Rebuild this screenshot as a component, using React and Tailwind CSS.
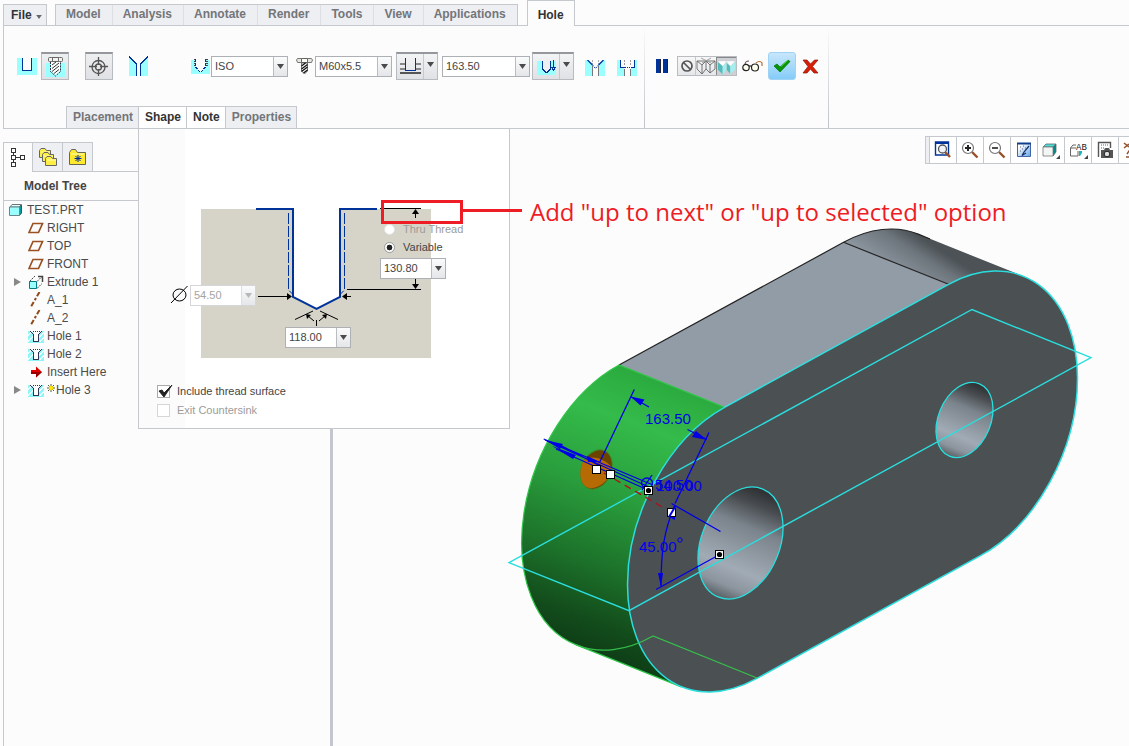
import { useState } from "react";
import clsx from "clsx";

const CYAN = "#99ffff";
const NAVY = "#003399";

const mainTabs = ["Model", "Analysis", "Annotate", "Render", "Tools", "View", "Applications"];

const subTabs = [
  { name: "Placement", lit: false },
  { name: "Shape", lit: true },
  { name: "Note", lit: true },
  { name: "Properties", lit: false },
];

const treeItems = [
  { name: "RIGHT", icon: PlaneIcon },
  { name: "TOP", icon: PlaneIcon },
  { name: "FRONT", icon: PlaneIcon },
  { name: "Extrude 1", icon: ExtrudeIcon, expandable: true },
  { name: "A_1", icon: AxisIcon },
  { name: "A_2", icon: AxisIcon },
  { name: "Hole 1", icon: TreeHoleIcon },
  { name: "Hole 2", icon: TreeHoleIcon },
  { name: "Insert Here", icon: InsertIcon },
  { name: "Hole 3", icon: TreeHoleIcon, expandable: true, isNew: true },
];

/* ---------- Ribbon icons ---------- */

function SimpleHoleIcon() {
  return (
    <svg width="20" height="17" viewBox="0 0 20 17" shapeRendering="crispEdges">
      <path d="M0 0h5v13h10V0h5v17H0z" fill={CYAN} />
      <path d="M5.500 0v12.500h9V0" fill="none" stroke={NAVY} />
    </svg>
  );
}

function ScrewIcon() {
  return (
    <svg width="19" height="20" viewBox="0 0 19 20">
      <path d="M0 6h19v14H0z" fill={CYAN} />
      <rect x="2.500" y=".5" width="4" height="4" rx="1" fill="#f2f2ee" stroke="#666" />
      <rect x="6.500" y=".5" width="6" height="4" fill="#f2f2ee" stroke="#666" />
      <rect x="12.500" y=".5" width="4" height="4" rx="1" fill="#f2f2ee" stroke="#666" />
      <path d="M5 5h9v9l-4.500 4.500L5 14z" fill="#fff" />
      <path d="M6 8l4-3M6 11.500l7-5.500M6 14.500l7-5.500M8 16.500l5-4" stroke="#333" />
      <path d="M4.500 5v9.500l5 4.500 5-4.500V5" fill="none" stroke="#334" strokeDasharray="2 1" />
    </svg>
  );
}

function BoltIcon() {
  return (
    <svg width="17" height="18" viewBox="0 0 17 18">
      <path d="M1.500 1.500h14l1 1.500-1 2.500h-14l-1-2.500z" fill="#e6e6e2" stroke="#777" />
      <path d="M5.500 1.500h6v4h-6z" fill="#fafaf6" stroke="#666" />
      <path d="M5.500 6h6v8l-3 3-3-3z" fill="#fff" stroke="#555" strokeWidth=".8" />
      <path d="M5.500 9l4-3M5.500 12l6-4.500M5.500 14.500l6-4.500M7.500 16l4-3" stroke="#111" strokeWidth="1.300" />
    </svg>
  );
}

function TargetIcon() {
  return (
    <svg width="20" height="20" viewBox="0 0 20 20" fill="none" stroke="#555" strokeWidth="1.300">
      <circle cx="9.500" cy="10" r="6.500" />
      <circle cx="9.500" cy="10" r="3" />
      <path d="M9.500 0v8M9.500 12v7M0 9.500h8M11 9.500h8" />
    </svg>
  );
}

function CountersinkIcon() {
  return (
    <svg width="19" height="20" viewBox="0 0 19 20" shapeRendering="crispEdges">
      <path d="M0 1l7 7v12H0zM19 1l-7 7v12h7z" fill={CYAN} />
      <path d="M0 .5l7.500 7.500v12M19 .5L11.500 8v12" fill="none" stroke={NAVY} strokeWidth="1.300" />
    </svg>
  );
}

function ThreadIcon() {
  return (
    <svg width="19" height="16" viewBox="0 0 19 16" shapeRendering="crispEdges">
      <path d="M0 2h4v6l5.500 6L15 8V2h4v14H0z" fill={CYAN} />
      <path d="M3.500 1v7M15.500 1v7" stroke="#445" strokeWidth="2" strokeDasharray="1 1" />
      <path d="M4.500 1v8l5 5.500 5-5.500V1" fill="none" stroke={NAVY} strokeDasharray="3 1" />
    </svg>
  );
}

function DepthIcon() {
  return (
    <svg width="21" height="17" viewBox="0 0 21 17" shapeRendering="crispEdges">
      <path d="M0 6h6M15 6h6M0 10.500h6M15 10.500h6" stroke="#888" strokeWidth="2" />
      <path d="M0 15h21" stroke="#555" strokeWidth="2" />
      <path d="M5.500 0v12.500h10V0" fill="none" stroke={NAVY} />
    </svg>
  );
}

function DrillDepthIcon() {
  return (
    <svg width="19" height="16" viewBox="0 0 19 16" shapeRendering="crispEdges">
      <path d="M0 2h19v14H0z" fill={CYAN} />
      <path d="M5 2h9v7l-4.500 4L5 9z" fill="#eef0f2" />
      <path d="M5.500 2v8l4.500 4 3.500-4V2" fill="none" stroke={NAVY} strokeWidth="1.300" />
      <path d="M16.500 1v8M14.500 8l2 3 2-3" fill="none" stroke={NAVY} strokeWidth="1.300" />
    </svg>
  );
}

function SinkIcon() {
  return (
    <svg width="20" height="16" viewBox="0 0 20 16">
      <path d="M0 0h3l4 4v12H0zM20 0h-2l-4 4v12h6z" fill={CYAN} />
      <path d="M7.500 6v10M13.500 6v10" stroke="#777" />
      <path d="M7.500 0v4M13.500 0v4" stroke="#aaa" strokeDasharray="2 1" />
      <path d="M2.500 0l5 5M18.500 0l-5 5" stroke={NAVY} strokeWidth="1.300" />
      <path d="M7.500 5l3 3.500 3-3.500" fill="none" stroke={NAVY} strokeDasharray="1.500 1" />
    </svg>
  );
}

function BoreIcon() {
  return (
    <svg width="20" height="16" viewBox="0 0 20 16" shapeRendering="crispEdges">
      <path d="M0 0h3v8h4v8H0zM20 0h-2v8h-4v8h6z" fill={CYAN} />
      <path d="M7.500 9v7M13.500 9v7" stroke="#777" />
      <path d="M7.500 0v6M13.500 0v6" stroke="#999" strokeDasharray="2 1" />
      <path d="M3.500 0v7.500h4M17.500 0v7.500h-4" fill="none" stroke={NAVY} strokeWidth="1.300" />
      <path d="M8 7.500h5" stroke={NAVY} strokeDasharray="1 1" />
    </svg>
  );
}

function NoPreviewIcon() {
  return (
    <svg width="14" height="14" viewBox="0 0 14 14" fill="none" stroke="#555" strokeWidth="1.700">
      <circle cx="7" cy="7" r="5" />
      <path d="M3.500 3.500l7 7" />
    </svg>
  );
}

function WireIcon() {
  return (
    <svg width="20" height="18" viewBox="0 0 20 18" fill="none" stroke="#666" strokeWidth=".9">
      <path d="M1 4h9L6 8zM10 4h9l-5 4zM1 4v8l5 5V8M6 17l4-5V4M14 8v8l5-4V4M10 12l4 4" />
      <path d="M5 1l10 5M15 1L6 6" stroke="#999" />
    </svg>
  );
}

function ShadedIcon() {
  return (
    <svg width="20" height="18" viewBox="0 0 20 18">
      <path d="M1 4l5 4v9l-5-5zM10 5l4 3v8l-4-4z" fill="#55bcbc" />
      <path d="M6 8l4-4v8l-4 5zM14 8l5-4v8l-5 4z" fill="#a4eef0" />
      <path d="M1 3h9L6 8zM10 3h9l-5 5z" fill="#fff" />
    </svg>
  );
}

function GlassesIcon() {
  return (
    <svg width="21" height="14" viewBox="0 0 21 14" fill="none" stroke="#222" strokeWidth="1.200">
      <path d="M3 6c0-3 1-4 4-4" stroke="#6b4a55" />
      <path d="M14 4c2-2 5-2 6 0v3" stroke="#b0703a" />
      <circle cx="4" cy="8.500" r="3.200" fill="#fffff0" />
      <circle cx="13" cy="8.500" r="3.500" fill="#fffff0" />
      <path d="M7 7l2.500 0" />
    </svg>
  );
}

function CheckIcon() {
  return (
    <svg width="18" height="14" viewBox="0 0 18 14">
      <path d="M1 7l3-2 3 3 8-7 2 1.500L7 13z" fill="#0a960a" stroke="#067006" strokeWidth=".7" />
      <path d="M8 7.500L15 1" stroke="#46d82a" />
    </svg>
  );
}

function CrossIcon() {
  return (
    <svg width="17" height="15" viewBox="0 0 17 15">
      <path d="M1 1h4l3.500 4L12.500 1H16l-5.500 6.500L16 14h-4L8.500 10 5 14H1l5-6.500z" fill="#d81e05" stroke="#8f1408" strokeWidth=".7" />
    </svg>
  );
}

/* ---------- Model tree icons ---------- */

function PlaneIcon() {
  return (
    <svg width="16" height="12" viewBox="0 0 16 12">
      <path d="M5 1.500h9.500L10.500 10.500H1z" fill="none" stroke="#9a5020" strokeWidth="1.700" />
    </svg>
  );
}

function AxisIcon() {
  return (
    <svg width="16" height="16" viewBox="0 0 16 16">
      <path d="M11.500 0L2.500 15.500" stroke="#8f4a1c" strokeWidth="2" strokeDasharray="5 2 2.500 2" />
    </svg>
  );
}

function ExtrudeIcon() {
  return (
    <svg width="16" height="15" viewBox="0 0 16 15" fill="none" stroke="#444">
      <path d="M1.500 6.500L7 1M9 13.500l5-5M9 6.500l5-5" strokeDasharray="2 1" />
      <path d="M10 1.500h4.500V7" strokeWidth="1.500" />
      <path d="M1.500 6.500h7v7h-7z" fill={CYAN} stroke="#007c86" />
    </svg>
  );
}

function TreeHoleIcon() {
  return (
    <svg width="16" height="13" viewBox="0 0 16 13" shapeRendering="crispEdges">
      <path d="M0 1h16v12H0z" fill="#8ff4f8" />
      <path d="M0 6l4-5M0 12l6-7M12 12l4-5M11 8l5-6" stroke="#e8ffff" strokeWidth="1.500" />
      <path d="M3 1h10l-3 3v8H6V4z" fill="#fff" />
      <path d="M2.500 1.500l3 3v7h5v-7l3-3" fill="none" stroke="#335" />
      <path d="M5 1.500h7" stroke="#335" strokeDasharray="1 1" />
    </svg>
  );
}

function InsertIcon() {
  return (
    <svg width="16" height="12" viewBox="0 0 16 12">
      <path d="M3 4h5V.5L14 6l-6 5.500V8H3z" fill="#e00000" />
      <path d="M3 6h11l-6 5.500V8H3z" fill="#900" />
    </svg>
  );
}

function PartIcon() {
  return (
    <svg width="13" height="12" viewBox="0 0 13 12">
      <path d="M1 3l2-2.500h9.500L10.500 3z" fill="#e4ffff" stroke="#677" />
      <path d="M10.500 3l2-2v8l-2 2.500z" fill="#009a9a" stroke="#455" />
      <path d="M.5 3h10v8.500H.5z" fill={CYAN} stroke="#688" />
    </svg>
  );
}

function NewStarIcon() {
  return (
    <svg width="8" height="8" viewBox="0 0 8 8" className="mb-1">
      <path d="M4 0v8M0 4h8M1 1l6 6M7 1L1 7" stroke="#443" strokeWidth=".9" />
      <circle cx="4" cy="4" r="2.200" fill="#ffe800" />
    </svg>
  );
}

function TreeTabIcon() {
  return (
    <svg width="14" height="19" viewBox="0 0 14 19" fill="none" stroke="#333" shapeRendering="crispEdges">
      <path d="M.5.500h4v4h-4zM.5 7.500h4v4h-4zM.5 14.500h4v4h-4zM9.500 7.500h4v4h-4zM2.500 5v2M2.500 12v2M5 9.500h4" />
    </svg>
  );
}

function FolderShape({ x, y }) {
  return (
    <g transform={`translate(${x} ${y})`}>
      <path d="M.5 2.500l1.500-2h4l1.500 2h4v7H.5z" fill="#ffee44" stroke="#666" />
      <path d="M2 4h9" stroke="#fffbb0" />
    </g>
  );
}

function FoldersIcon() {
  return (
    <svg width="20" height="19" viewBox="0 0 20 19">
      <FolderShape x={1} y={0} />
      <FolderShape x={4} y={4} />
      <FolderShape x={7} y={8} />
    </svg>
  );
}

function FavoritesIcon() {
  return (
    <svg width="18" height="16" viewBox="0 0 18 16">
      <path d="M.5 3.500l2-3h4l2 3h8v12H.5z" fill="#ffe92e" stroke="#665" />
      <path d="M2 5h13" stroke="#fffcc0" />
      <path d="M9 6v7M5.500 9.500h7M6.500 7l5 5M11.500 7l-5 5" stroke="#002a9c" />
    </svg>
  );
}

/* ---------- View toolbar icons ---------- */

function Lens({ children }) {
  return (
    <svg width="18" height="18" viewBox="0 0 18 18">
      <path d="M11 11l5.500 5.500" stroke="#96502a" strokeWidth="2.400" />
      <circle cx="7" cy="7" r="5.500" fill="#fff" stroke="#777" strokeWidth="1.200" />
      {children}
    </svg>
  );
}

function RefitIcon() {
  return (
    <svg width="18" height="18" viewBox="0 0 18 18">
      <path d="M1.500 1h13v13h-13z" fill="#fff" stroke="#003399" strokeWidth="1.400" />
      <path d="M1 2h14" stroke="#003399" strokeWidth="2" />
      <path d="M11 11l5 5" stroke="#96502a" strokeWidth="2.400" />
      <circle cx="8.500" cy="8" r="4" fill="#eef4f8" stroke="#555" strokeWidth="1.300" />
    </svg>
  );
}

function RepaintIcon() {
  return (
    <svg width="16" height="16" viewBox="0 0 16 16">
      <defs>
        <linearGradient id="repaint" x1="0" y1="0" x2="1" y2="1">
          <stop offset=".2" stopColor="#fff" />
          <stop offset="1" stopColor="#5aa6e6" />
        </linearGradient>
      </defs>
      <path d="M1.500 1.500h13v13h-13z" fill="url(#repaint)" stroke="#4466a8" />
      <path d="M1 1.500h14" stroke="#123c8c" strokeWidth="2" />
      <path d="M13 4L8 10l-2 3.500 4-2.500" fill="none" stroke="#1a2c70" strokeWidth="1.200" />
      <path d="M4 5h1M7 4h1M6 7h1M4 9h1M9 6h1" stroke="#668" />
    </svg>
  );
}

function CubeIcon() {
  return (
    <svg width="18" height="17" viewBox="0 0 18 17">
      <path d="M1 5l3-3h10l-3 3z" fill="#48e0dc" stroke="#666" strokeWidth=".8" />
      <path d="M11 5l3-3v8l-3 4z" fill="#008888" stroke="#666" strokeWidth=".8" />
      <path d="M1 5h10v9H1z" fill="#f4f6f6" stroke="#777" strokeWidth=".8" />
      <path d="M18 13v4h-4z" fill="#444" />
    </svg>
  );
}

function NamedViewIcon() {
  return (
    <svg width="19" height="17" viewBox="0 0 19 17">
      <path d="M7 6H1.500v8H9V9M1.500 6L4 3h3" fill="none" stroke="#666" />
      <path d="M10 9h3v2l-2 3h-1z" fill="#1cb8b8" />
      <text x="7" y="8" fontSize="9" fontFamily="Liberation Mono, monospace" fill="#222">AB</text>
      <path d="M19 13v4h-4z" fill="#444" />
    </svg>
  );
}

function CameraIcon() {
  return (
    <svg width="17" height="18" viewBox="0 0 17 18">
      <path d="M1.500 16V1.500h12V7" fill="none" stroke="#555" strokeWidth="1.400" />
      <path d="M4 4h8M4 7h3" stroke="#666" strokeDasharray="1 1" />
      <path d="M4 9h3l1-2h4l1 2h3v8H4z" fill="#555" />
      <circle cx="10" cy="13" r="2.800" fill="#ddd" stroke="#222" />
    </svg>
  );
}

const viewTools = [
  { label: "Refit", icon: <RefitIcon /> },
  { label: "Zoom in", icon: <Lens><path d="M7 4v6M4 7h6" stroke="#222" strokeWidth="2" /></Lens> },
  { label: "Zoom out", icon: <Lens><path d="M4 7h6" stroke="#222" strokeWidth="1.600" /></Lens> },
  { label: "Repaint", icon: <RepaintIcon /> },
  { label: "Display style", icon: <CubeIcon /> },
  { label: "Saved orientations", icon: <NamedViewIcon /> },
  { label: "View manager", icon: <CameraIcon /> },
];

/* ---------- Controls ---------- */

function Arrow({ dim }) {
  return (
    <svg width="7" height="5" viewBox="0 0 7 5">
      <path d="M0 0h7L3.500 5z" fill={dim ? "#b8b8b8" : "#4a4a4a"} />
    </svg>
  );
}

function Combo({ label, value, className, disabled }) {
  return (
    <div
      className={clsx(
        "flex h-[21px] border bg-white",
        disabled ? "border-[#d4d6d9]" : "border-[#adb0b5]",
        className
      )}
    >
      <div className="relative flex-1">
        <select
          aria-label={label}
          disabled={disabled}
          defaultValue={value}
          className={clsx(
            "block h-full w-full appearance-none pl-[3px] text-[11px] outline-none",
            disabled ? "text-[#a3a3a3]" : "text-[#444]"
          )}
        >
          <option>{value}</option>
        </select>
        <span
          className={clsx(
            "pointer-events-none absolute inset-y-0 right-0 flex w-[14px] items-center justify-center border-l bg-linear-to-b from-[#fafbfb] to-[#e4e6e9]",
            disabled ? "border-[#dcdee1]" : "border-[#b9bcc1]"
          )}
        >
          <Arrow dim={disabled} />
        </span>
      </div>
    </div>
  );
}

function PressedButton({ label, children }) {
  return (
    <button
      aria-label={label}
      className="flex h-7 w-7 items-center justify-center border border-t-2 border-[#b7babf] border-t-[#94979b] bg-linear-to-b from-[#eeeff0] to-[#dfe1e5]"
    >
      {children}
    </button>
  );
}

function SplitButton({ label, children }) {
  return (
    <div className="flex h-7 w-[42px] border border-t-2 border-[#b7babf] border-t-[#94979b] bg-linear-to-b from-[#f3f4f5] to-[#dfe1e5]">
      <button aria-label={label} className="flex flex-1 items-center justify-center">
        {children}
      </button>
      <button
        aria-label={`${label} options`}
        className="flex w-[14px] items-center justify-center border-l border-[#c5c8cc] pb-1"
      >
        <Arrow />
      </button>
    </div>
  );
}

function RibbonTabs() {
  return (
    <nav className="flex items-end pl-[3px] text-xs font-bold text-[#737579]">
      <button className="flex h-[22px] w-11 items-center gap-1 border border-[#c5c8cc] bg-[#edeff2] pl-[7px] text-[#333]">
        File
        <svg width="6" height="4" viewBox="0 0 7 5" className="mt-1">
          <path d="M0 0h7L3.500 5z" fill="#666" />
        </svg>
      </button>
      <div className="h-[26px] w-2 border-b border-[#c5c8cc]" />
      <div className="flex h-[22px] border border-[#c5c8cc] bg-[#edeff2]">
        {mainTabs.map((name) => (
          <button key={name} className="border-r border-[#dcdee1] pb-[2px] pl-[10px] pr-[11px] last:border-r-0">
            {name}
          </button>
        ))}
      </div>
      <div className="h-[26px] w-[9px] border-b border-[#c5c8cc]" />
      <button className="h-[26px] w-12 border border-b-0 border-[#c5c8cc] pt-[2px] text-[#333]">Hole</button>
      <div className="h-[26px] flex-1 border-b border-[#c5c8cc]" />
    </nav>
  );
}

function Divider() {
  return <div className="w-px bg-linear-to-b from-[#fcfcfc] via-[#dcdee1] to-[#c0c3c8]" />;
}

function Ribbon() {
  return (
    <div className="ml-[3px] flex h-[103px] border-b border-l border-[#c5c8cc]">
      <div className="flex flex-col">
        <div className="flex h-20 shrink-0 items-center pl-[13px] pr-[7px]">
          <button aria-label="Simple hole"><SimpleHoleIcon /></button>
          <div className="ml-1 mr-4">
            <PressedButton label="Standard hole"><ScrewIcon /></PressedButton>
          </div>
          <PressedButton label="Tapping"><TargetIcon /></PressedButton>
          <button aria-label="Tapered" className="ml-4 mr-[43px]"><CountersinkIcon /></button>
          <div className="flex w-5"><ThreadIcon /></div>
          <Combo label="Thread standard" value="ISO" className="mr-2 w-[77px]" />
          <div className="flex w-[19px]"><BoltIcon /></div>
          <Combo label="Screw size" value="M60x5.5" className="mr-1 w-[77px]" />
          <SplitButton label="Depth"><DepthIcon /></SplitButton>
          <Combo label="Depth value" value="163.50" className="ml-1 mr-[2px] w-[88px]" />
          <SplitButton label="Drill depth"><DrillDepthIcon /></SplitButton>
          <button aria-label="Countersink" className="ml-[11px] mr-3 mt-1"><SinkIcon /></button>
          <button aria-label="Counterbore" className="mt-1"><BoreIcon /></button>
        </div>
        <div className="flex pl-[62px] text-xs font-bold">
          {subTabs.map(({ name, lit }) => (
            <button
              key={name}
              className={clsx(
                "h-[22px] border-l border-t border-[#c5c8cc] pb-[2px] pl-[6px] pr-[5px] last:border-r",
                lit ? "bg-white text-[#333]" : "bg-[#edeff2] text-[#737579]"
              )}
            >
              {name}
            </button>
          ))}
        </div>
      </div>
      <Divider />
      <div className="flex h-20 w-[183px] shrink-0 items-center pl-[11px]">
        <button aria-label="Pause" className="flex gap-[2px]">
          <span className="h-[14px] w-[5px] border-r border-[#223] bg-[#003399]" />
          <span className="h-[14px] w-[5px] border-r border-[#223] bg-[#003399]" />
        </button>
        <div className="ml-[9px] mr-[5px] flex h-5 w-[60px] border border-[#b9bcc0] bg-linear-to-b from-[#f7f7f8] to-[#e5e7ea]">
          <button aria-label="No preview" className="flex flex-1 items-center justify-center"><NoPreviewIcon /></button>
          <button aria-label="Unattached preview" className="flex w-[21px] items-center justify-center border-l border-[#c5c8cc]"><WireIcon /></button>
          <button aria-label="Attached preview" className="flex w-5 items-center justify-center border-l border-t border-[#888] bg-[#cdd0d5]"><ShadedIcon /></button>
        </div>
        <button aria-label="Verify"><GlassesIcon /></button>
        <button
          aria-label="Accept"
          className="ml-[5px] mr-[6px] flex h-7 w-7 items-center justify-center rounded-[3px] border border-[#9fd3f5] bg-linear-to-b from-[#c8e6fb] to-[#84ccf8]"
        >
          <CheckIcon />
        </button>
        <button aria-label="Cancel"><CrossIcon /></button>
      </div>
      <Divider />
    </div>
  );
}

/* ---------- Shape panel ---------- */

function HoleSection() {
  return (
    <svg width="370" height="253" viewBox="139 129 370 253" className="block">
      <path d="M201 209h230v149H201z" fill="#d6d4c8" />
      <path d="M293 209h47v88l-23.500 12L293 297z" fill="#fff" />
      <g fill="none" stroke={NAVY}>
        <path d="M256 209h37v88l23.500 12L340 297v-88h37" strokeWidth="2" />
        <path d="M288.500 213v77l4 4M344.500 213v77l-4 4" strokeDasharray="11 2" />
      </g>
      <g fill="none" stroke="#000">
        <path d="M380 208.500h41M347 289.500h74M415.500 211v7M415.500 279v9M258 296.500h32M344 296.500h7" />
        <path d="M313 311l-18 8.500M320 311l18 8.500M316.500 320v6M308 316l6 5M325 316l-6 5" />
        <path d="M171 303l16.500-17" />
        <ellipse cx="179.500" cy="295" rx="6.500" ry="6" />
      </g>
      <path d="M415.500 209l3.500 5h-7zM415.500 289l3.500-5h-7zM292 296.500l-5-3.500v7zM342 296.500l5-3.500v7zM306 314l5 1-4 4zM327 314l-5 1 4 4z" />
    </svg>
  );
}

function ShapePanel() {
  const [thread, setThread] = useState(true);
  return (
    <form className="absolute left-[138px] top-32 z-10 h-[301px] w-[372px] border border-[#c5c8cc] bg-white text-[11px] text-[#444]">
      <div className="flex h-full flex-col bg-linear-to-r from-[#fbfbfb] from-[46px] to-white to-[46px]">
        <div className="relative h-[253px]">
          <HoleSection />
          <div className="absolute left-[245px] top-[91px] flex flex-col">
            <label className="flex h-[18px] items-center gap-2 text-[#9c9c98]">
              <input type="radio" name="depth" disabled className="size-[11px] appearance-none rounded-full border border-[#e2e2e2] bg-white" />
              Thru Thread
            </label>
            <label className="flex h-[18px] items-center gap-2">
              <input
                type="radio"
                name="depth"
                defaultChecked
                className="size-[11px] appearance-none rounded-full border border-[#999] bg-white bg-radial from-[#222] from-40% to-white to-50%"
              />
              Variable
            </label>
          </div>
          <Combo label="Thread depth" value="130.80" className="absolute left-[241px] top-[129px] w-[66px]" />
          <Combo label="Drill diameter" value="54.50" disabled className="absolute left-[51px] top-[156px] w-[66px]" />
          <Combo label="Tip angle" value="118.00" className="absolute left-[146px] top-[198px] w-[66px]" />
        </div>
        <label className="ml-[18px] flex h-[18px] items-center gap-[7px]">
          <span className="grid">
            <input
              type="checkbox"
              checked={thread}
              onChange={() => setThread(!thread)}
              className="col-start-1 row-start-1 size-[13px] appearance-none border border-[#aaa] bg-white"
            />
            {thread && (
              <svg width="16" height="13" viewBox="0 0 16 13" className="pointer-events-none col-start-1 row-start-1 -mr-[3px]">
                <path d="M2 6l3-1 2 3 8-8-8 12z" fill="#222" stroke="#222" strokeLinejoin="round" />
              </svg>
            )}
          </span>
          Include thread surface
        </label>
        <label className="ml-[18px] flex h-5 items-center gap-[7px] text-[#9c9c9c]">
          <input type="checkbox" disabled className="size-[13px] appearance-none border border-[#d4d6d9] bg-white" />
          Exit Countersink
        </label>
      </div>
    </form>
  );
}

/* ---------- Model tree ---------- */

function ModelTree() {
  const iconTab = "flex h-[30px] items-center justify-center border-t border-r border-[#c5c8cc]";
  return (
    <aside className="ml-[3px] mt-[13px] w-[327px] shrink-0 border-l border-[#c5c8cc] text-xs text-[#4b4b4b]">
      <div className="flex">
        <button aria-label="Model tree" className={clsx(iconTab, "w-[29px]")}><TreeTabIcon /></button>
        <button aria-label="Folders" className={clsx(iconTab, "w-[30px] border-b bg-[#edeff2]")}><FoldersIcon /></button>
        <button aria-label="Favorites" className={clsx(iconTab, "w-[30px] border-b bg-[#edeff2]")}><FavoritesIcon /></button>
        <div className="flex-1 border-b border-[#c5c8cc]" />
      </div>
      <h2 className="h-[29px] border-b border-[#c5c8cc] pl-5 text-xs font-bold leading-7 text-[#444]">Model Tree</h2>
      <ul className="leading-[18px]">
        <li className="flex h-[18px] items-center gap-[5px] pl-[5px]">
          <PartIcon />
          TEST.PRT
        </li>
        {treeItems.map(({ name, icon: Icon, expandable, isNew }) => (
          <li key={name} className="flex h-[18px] items-center pl-[10px]">
            <span className="w-[14px]">
              {expandable && (
                <svg width="7" height="8" viewBox="0 0 7 8">
                  <path d="M0 0l7 4-7 4z" fill="#888" />
                </svg>
              )}
            </span>
            <Icon />
            <span className="ml-[3px] flex items-center gap-px">
              {isNew && <NewStarIcon />}
              {name}
            </span>
          </li>
        ))}
      </ul>
    </aside>
  );
}

/* ---------- 3D view ---------- */

function Handle({ x, y, dot }) {
  return (
    <g shapeRendering="crispEdges">
      <rect x={x - 4} y={y - 4} width="8" height="8" fill="#fff" stroke="#000" />
      {dot && <circle cx={x} cy={y} r="2.600" shapeRendering="auto" />}
    </g>
  );
}

function Part() {
  return (
    <svg width="796" height="617" viewBox="333 129 796 617" className="absolute left-0 top-0">
      <defs>
        <linearGradient id="green" gradientUnits="userSpaceOnUse" x1="680" y1="380" x2="580" y2="645">
          <stop offset="0" stopColor="#2aa83d" />
          <stop offset=".2" stopColor="#34bb4a" />
          <stop offset=".45" stopColor="#2a9f3d" />
          <stop offset=".7" stopColor="#1d742b" />
          <stop offset=".9" stopColor="#134d1c" />
          <stop offset="1" stopColor="#0f3f17" />
        </linearGradient>
        <linearGradient id="cap" gradientUnits="userSpaceOnUse" x1="880" y1="282" x2="912" y2="232">
          <stop offset="0" stopColor="#929ca6" />
          <stop offset=".3" stopColor="#8a949d" />
          <stop offset=".75" stopColor="#6d757c" />
          <stop offset="1" stopColor="#4c5256" />
        </linearGradient>
        <linearGradient id="bore" x1=".5" y1="0" x2=".5" y2="1">
          <stop offset="0" stopColor="#2c2e30" />
          <stop offset=".15" stopColor="#484c50" />
          <stop offset=".35" stopColor="#7b848c" />
          <stop offset=".72" stopColor="#a1abb5" />
          <stop offset=".88" stopColor="#8c959e" />
          <stop offset="1" stopColor="#595f64" />
        </linearGradient>
      </defs>

      {/* Top and end faces */}
      <path d="M619 365L843.600 242.300 948.600 284.300 724 407z" fill="#929ca6" />
      <path d="M843.600 242.300A104 155.400 22.500 0 1 918.200 234.100L1023.200 276.100L1010 310L948.600 284.300z" fill="url(#cap)" />
      <path d="M619 365L843.600 242.300A104 155.400 22.500 0 1 918.200 234.100L930 239M843.600 242.300l105 42" fill="none" stroke="#222" strokeWidth="1.200" />

      {/* Selected cylindrical face */}
      <path
        d="M619 365A104 155.400 22.500 0 0 576.300 644.900L681.300 686.900L740 600L724 407z"
        fill="url(#green)"
      />
      <path d="M724 407L619 365A104 155.400 22.500 0 0 576.300 644.900L681.300 686.900" fill="none" stroke="#2fc548" strokeWidth="1.200" />

      {/* Front face */}
      <path
        d="M724.600 407.300L948.600 284.300A104 155.400 22.500 0 1 1077.500 378.200A104 155.400 22.500 0 1 980.400 555.700L756.400 678.700A104 155.400 22.500 0 1 627.500 584.800A104 155.400 22.500 0 1 724.600 407.300z"
        fill="#4b5053"
        stroke="#2adede"
        strokeWidth="1.500"
      />
      <path d="M576.300 644.900A104 155.400 22.500 0 0 653 636l104 42" fill="none" stroke="#35c04c" strokeWidth="1.200" />
      <ellipse cx="740.500" cy="543" rx="39.100" ry="58.400" transform="rotate(22.500 740.500 543)" fill="url(#bore)" stroke="#2adede" strokeWidth="1.300" />
      <ellipse cx="964.500" cy="420" rx="26.200" ry="39.200" transform="rotate(22.500 964.500 420)" fill="url(#bore)" stroke="#2adede" strokeWidth="1.300" />

      {/* Hole being placed */}
      <ellipse cx="596.300" cy="469.500" rx="15" ry="20.500" transform="rotate(24 596.300 469.500)" fill="#6b4200" stroke="#3f8a2a" />
      <path d="M584 460C594 453 610 462 612 469C608 485 592 492 585 486C579 481 579 468 584 460z" fill="#b66a04" />

      {/* Datum plane */}
      <path d="M509 562.700L972 309.500 1091 357.700 629 610.700z" fill="none" stroke="#2adede" strokeWidth="1.400" />

      <path d="M604 473l60 35" stroke="#b01010" strokeWidth="1.300" strokeDasharray="7 5" />

      {/* Placement dimensions */}
      <g fill="none" stroke="#0000e6" strokeWidth="1.300">
        <path d="M634.300 389.500L599.300 463M630.500 396.500L649 407M709 432.500L675 503.500M687.500 429.500L707 439.500" />
        <path d="M671.500 503.500L720.500 531.500M656 589.500L717 556M675 505C664 530 661 552 661 586" />
        <path d="M543.700 439L653 485M545 440L649 487M556 449L648 490M562 446L600 466" />
        <ellipse cx="647" cy="483" rx="5.500" ry="5" />
        <path d="M642 490l10-15" />
      </g>
      <g fill="#0000e6">
        <path d="M630.500 396.500l14 3-4 6zM707 440l-15-3 4-6zM661 587l-3-14h5zM675 504l-6 13 6 3z" />
        <path d="M545 440l18 4-3 5zM552 446l24 9-3 4zM600 462l-13-6 1 6z" />
      </g>
      <g fill="#0000e6" fontFamily="'Liberation Sans', Arial, sans-serif" fontSize="15">
        <text x="645" y="424">163.50</text>
        <text x="639" y="552">45.00</text>
        <text x="655" y="490">54.50</text>
        <text x="656" y="491">100.00</text>
      </g>
      <circle cx="680" cy="540" r="2.200" fill="none" stroke="#0000e6" />

      <Handle x={596.5} y={469.5} />
      <Handle x={610.5} y={474.5} />
      <Handle x={671.5} y={512.5} />
      <Handle x={648.5} y={490.5} dot />
      <Handle x={719.5} y={554.5} dot />
      <path d="M669 517l6-10" stroke="#0000e6" strokeWidth="2" />
    </svg>
  );
}

function ViewToolbar() {
  return (
    <div className="relative ml-auto mt-[7px] flex h-7 w-[204px] overflow-hidden border-y border-l border-[#c5c8cc] bg-white">
      <div className="w-[3px] shrink-0 bg-[#edeff2]" />
      {viewTools.map(({ label, icon }) => (
        <button key={label} aria-label={label} className="flex w-[27px] shrink-0 items-center justify-center border-l border-[#c5c8cc]">
          {icon}
        </button>
      ))}
      <button aria-label="Datum display" className="flex w-[27px] shrink-0 items-center border-l border-[#c5c8cc] pl-1">
        <svg width="16" height="18" viewBox="0 0 16 18" stroke="#96502a" strokeWidth="1.500">
          <path d="M1 2l5 4M1 7l5-4M3 16h12M4 13l4-6" />
        </svg>
      </button>
    </div>
  );
}

function Callout() {
  return (
    <div className="pointer-events-none absolute left-[381px] top-[200px] z-20 flex text-[#ee1c24]">
      <div className="h-6 w-[82px] border-[3px] border-[#ee1c24]" />
      <div className="mt-[9px] h-[3px] w-[59px] bg-[#ee1c24]" />
      <p className="ml-2 whitespace-nowrap font-['Open_Sans',sans-serif] text-2xl leading-6">
        Add "up to next" or "up to selected" option
      </p>
    </div>
  );
}

export default function App() {
  return (
    <div className="relative flex min-h-screen flex-col overflow-hidden bg-[#fcfcfc] font-['Liberation_Sans',Arial,sans-serif]">
      <RibbonTabs />
      <Ribbon />
      <ShapePanel />
      <main className="flex flex-1">
        <ModelTree />
        <div className="mt-[13px] w-[3px] shrink-0 bg-[#c3c6ca]" />
        <section className="relative min-h-[617px] flex-1 overflow-hidden">
          <Part />
          <ViewToolbar />
        </section>
      </main>
      <Callout />
    </div>
  );
}
